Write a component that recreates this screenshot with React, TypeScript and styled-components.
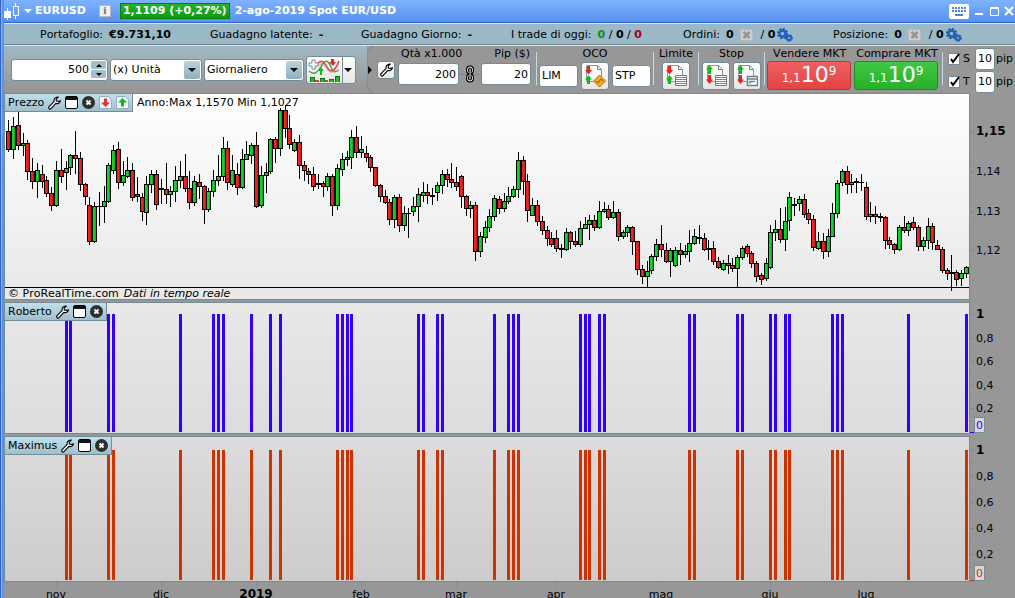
import React from "react";
import styled, { createGlobalStyle } from "styled-components";

const EDGE = "#748c98";
const UP = "#0fd22a";
const DOWN = "#ee2222";

const GlobalStyle = createGlobalStyle`
  * { box-sizing: border-box; }
  body {
    margin: 0;
    overflow: hidden;
    background: #979797;
    font-family: "DejaVu Sans", Verdana, sans-serif;
    font-size: 11px;
    line-height: 14px;
    font-kerning: none;
    color: #000;
  }
  button, input, select { font: inherit; color: inherit; margin: 0; }
  svg { display: block; flex: none; }
`;

/* ---------- data ---------- */

type Candle = [high: number, top: number, bottom: number, low: number, up: 0 | 1];

/* Daily candles, in thirds of a pixel below the top of the scale. */
const CANDLES: Candle[] = [
  [90, 123, 180, 186, 0], [82, 108, 180, 207, 1], [62, 105, 168, 180, 0], [130, 159, 168, 198, 1],
  [150, 159, 246, 270, 0], [204, 243, 276, 297, 0], [219, 240, 276, 324, 1], [225, 252, 276, 294, 0],
  [258, 270, 312, 321, 0], [291, 309, 348, 363, 0], [213, 240, 348, 351, 1], [177, 240, 261, 279, 0],
  [213, 234, 249, 300, 1], [192, 195, 234, 255, 1], [123, 195, 207, 252, 0], [186, 204, 285, 303, 0],
  [279, 282, 321, 345, 0], [321, 345, 456, 465, 0], [336, 348, 456, 459, 1], [306, 348, 351, 408, 0],
  [288, 333, 351, 399, 1], [219, 225, 336, 339, 1], [165, 180, 243, 252, 1], [156, 177, 279, 297, 0],
  [213, 255, 279, 288, 1], [201, 240, 261, 264, 1], [219, 240, 324, 333, 0], [261, 312, 322, 336, 0],
  [309, 321, 366, 393, 0], [258, 282, 369, 405, 1], [240, 252, 285, 309, 1], [240, 252, 345, 360, 0],
  [267, 294, 300, 342, 0], [219, 297, 315, 342, 0], [288, 303, 315, 351, 1], [228, 270, 306, 336, 1],
  [213, 258, 273, 294, 1], [192, 258, 297, 306, 0], [243, 294, 339, 357, 0], [258, 273, 339, 348, 1],
  [252, 276, 291, 327, 0], [285, 288, 360, 402, 0], [294, 303, 360, 366, 1], [240, 270, 306, 321, 1],
  [195, 258, 273, 288, 1], [141, 174, 261, 273, 1], [153, 174, 279, 300, 0], [195, 240, 285, 291, 1],
  [219, 252, 294, 315, 0], [177, 207, 294, 297, 1], [153, 192, 210, 210, 1], [159, 165, 198, 222, 1],
  [126, 165, 351, 354, 0], [228, 255, 348, 354, 1], [219, 246, 258, 309, 1], [144, 147, 246, 252, 1],
  [141, 147, 177, 219, 0], [54, 60, 177, 198, 1], [45, 60, 117, 144, 0], [75, 114, 165, 177, 0],
  [147, 156, 183, 186, 1], [135, 156, 228, 267, 0], [213, 225, 243, 273, 0], [234, 243, 255, 282, 0],
  [231, 252, 291, 303, 0], [252, 279, 285, 297, 0], [273, 279, 291, 321, 0], [249, 258, 291, 303, 1],
  [252, 258, 348, 378, 0], [222, 234, 348, 360, 1], [189, 207, 240, 258, 1], [183, 201, 210, 228, 1],
  [120, 141, 204, 237, 1], [108, 141, 189, 204, 0], [138, 177, 189, 204, 1], [168, 189, 204, 216, 0],
  [195, 201, 234, 246, 0], [231, 231, 288, 291, 0], [282, 285, 321, 336, 0], [300, 318, 339, 342, 0],
  [327, 336, 390, 405, 0], [315, 321, 390, 414, 1], [312, 321, 408, 426, 0], [348, 369, 408, 423, 1],
  [354, 369, 372, 444, 0], [321, 348, 366, 378, 1], [294, 312, 351, 396, 1], [276, 306, 318, 336, 1],
  [282, 306, 318, 342, 0], [294, 315, 321, 345, 0], [276, 285, 309, 333, 1], [240, 252, 288, 312, 1],
  [237, 252, 270, 291, 0], [219, 267, 279, 294, 0], [231, 276, 291, 303, 0], [255, 258, 321, 354, 0],
  [315, 318, 357, 378, 0], [333, 345, 357, 384, 1], [336, 345, 486, 513, 0], [426, 438, 486, 501, 1],
  [393, 411, 444, 459, 1], [357, 378, 414, 426, 1], [315, 324, 381, 393, 1], [318, 327, 357, 372, 0],
  [309, 333, 357, 366, 1], [291, 318, 336, 342, 1], [288, 297, 321, 324, 1], [186, 210, 300, 324, 1],
  [198, 210, 276, 315, 0], [252, 273, 363, 396, 0], [324, 345, 378, 378, 1], [330, 345, 396, 408, 0],
  [378, 393, 423, 435, 0], [408, 420, 447, 468, 0], [426, 444, 465, 471, 0], [420, 444, 477, 486, 0],
  [462, 474, 480, 504, 0], [414, 426, 480, 483, 1], [423, 426, 456, 477, 0], [423, 453, 465, 471, 0],
  [393, 414, 465, 471, 1], [381, 402, 417, 417, 1], [375, 390, 405, 450, 1], [375, 390, 414, 423, 0],
  [333, 363, 414, 417, 1], [336, 357, 366, 369, 1], [345, 357, 384, 390, 0], [333, 366, 384, 387, 1],
  [357, 366, 441, 453, 0], [420, 426, 441, 447, 1], [405, 411, 429, 441, 1], [408, 411, 456, 495, 0],
  [453, 453, 540, 555, 0], [525, 537, 561, 582, 0], [513, 543, 561, 591, 1], [492, 498, 543, 552, 1],
  [447, 462, 501, 513, 1], [405, 462, 480, 501, 0], [459, 480, 516, 519, 0], [474, 480, 516, 561, 1],
  [471, 480, 528, 531, 1], [459, 480, 495, 525, 0], [465, 483, 495, 504, 1], [420, 459, 486, 516, 1],
  [417, 438, 462, 465, 1], [405, 441, 447, 462, 0], [429, 444, 480, 483, 0], [450, 474, 480, 510, 0],
  [453, 474, 516, 525, 0], [501, 513, 534, 537, 0], [510, 519, 540, 543, 1], [495, 519, 528, 552, 0],
  [504, 525, 537, 546, 0], [495, 501, 537, 591, 1], [468, 474, 504, 510, 1], [462, 468, 492, 501, 0],
  [483, 489, 522, 534, 0], [513, 519, 561, 576, 0], [549, 555, 570, 585, 0], [504, 519, 567, 573, 1],
  [405, 426, 534, 537, 1], [390, 417, 429, 453, 1], [354, 417, 450, 459, 0], [351, 393, 450, 483, 1],
  [306, 321, 393, 423, 1], [324, 342, 348, 378, 0], [318, 327, 342, 363, 1], [312, 327, 375, 384, 0],
  [357, 369, 390, 402, 0], [375, 387, 474, 483, 0], [426, 453, 477, 480, 1], [429, 453, 486, 507, 0],
  [417, 438, 486, 501, 1], [339, 369, 441, 441, 1], [270, 279, 372, 384, 1], [237, 243, 279, 288, 1],
  [228, 243, 285, 312, 0], [252, 276, 285, 309, 1], [264, 273, 279, 309, 0], [252, 276, 279, 303, 0],
  [276, 291, 381, 390, 0], [336, 372, 381, 396, 1], [348, 372, 381, 402, 0], [369, 378, 384, 396, 0],
  [378, 381, 453, 477, 0], [441, 450, 465, 477, 0], [459, 462, 480, 492, 0], [405, 411, 480, 483, 1],
  [378, 411, 423, 429, 0], [393, 399, 423, 438, 1], [381, 396, 414, 420, 0], [405, 411, 471, 483, 0],
  [441, 450, 471, 483, 1], [384, 408, 453, 477, 1], [399, 408, 459, 480, 0], [450, 465, 480, 480, 0],
  [471, 477, 543, 549, 0], [534, 540, 552, 570, 0], [495, 546, 552, 603, 0], [540, 546, 570, 588, 0],
  [540, 549, 567, 588, 1], [528, 531, 552, 564, 1],
];

/* Days on which both indicators fire. */
const SIGNALS = [
  12, 13, 21, 22, 36, 43, 44, 45, 51, 55, 57, 69, 70, 71, 72, 86, 87, 90, 91, 102, 105, 106, 107,
  120, 121, 122, 124, 125, 143, 144, 153, 154, 160, 161, 163, 164, 173, 174, 175, 189, 201,
];

const MONTHS: { at: number; text: string; strong?: boolean }[] = [
  { at: 52, text: "nov" }, { at: 157, text: "dic" }, { at: 252, text: "2019", strong: true },
  { at: 357, text: "feb" }, { at: 452, text: "mar" }, { at: 552, text: "apr" },
  { at: 657, text: "mag" }, { at: 766, text: "giu" }, { at: 862, text: "lug" },
];

const PLOT_WIDTH = 964;
const dayX = (i: number) => Math.floor(8.87 + 4.7625 * i) - 5;
const levelY = (v: number) => Math.round(v / 3) - 4;

/* ---------- window frame ---------- */

const Window = styled.main`
  min-height: 100vh;
  padding-left: 4px;
  overflow: hidden;
  background: linear-gradient(90deg, #2e62c4 1px, #8ab8ff 1px 2px, #5b90ee 2px 4px, #979797 4px);
`;

const TitleBar = styled.header`
  height: 23px;
  display: flex;
  align-items: center;
  color: #fff;
  font-weight: bold;
  background: linear-gradient(#7db2ff, #5891ee);
  border-bottom: 1px solid #2f68c8;
`;

const Symbol = styled.button`
  display: flex;
  align-items: center;
  gap: 3px;
  padding: 0;
  border: 0;
  background: none;
  font-weight: bold;
`;

const InfoMark = styled.button`
  width: 12px;
  height: 12px;
  margin: 0 9px 0 13px;
  padding: 0;
  border: 1px solid #b9b9b9;
  background: #f1f1f1;
  color: #777;
  font: bold 10px/10px "DejaVu Serif", serif;
`;

const Quote = styled.span`
  height: 16px;
  padding: 0 2px;
  margin-right: 5px;
  border: 1px solid #07800b;
  background: linear-gradient(#27b32b, #0c9a12);
`;

const WindowTools = styled.div`
  margin-left: auto;
  display: flex;
  align-items: center;
  gap: 5px;
  padding-right: 1px;
`;

const BareButton = styled.button`
  display: flex;
  align-items: center;
  padding: 0;
  border: 0;
  background: none;
`;

const Summary = styled.section`
  height: 22px;
  display: grid;
  grid-template-columns: 170fr 151fr 150fr 172fr 150fr 182fr;
  align-items: center;
  padding: 1px 0 0 36px;
  background: #9ab8c5;
  border-top: 1px solid #cfe9f2;
  border-bottom: 1px solid #71868f;
  white-space: nowrap;
`;

const SummaryItem = styled.div`
  display: flex;
  align-items: center;
  gap: 6px;
`;

const Automatic = styled.span`
  display: flex;
  align-items: center;
  gap: 2px;
  padding-left: 2px;
`;

const Tone = styled.b<{ $c: string }>`
  color: ${(p) => p.$c};
`;

/* ---------- toolbar ---------- */

const Toolbar = styled.section`
  height: 48px;
  display: flex;
  border-top: 1px solid #dbe6ea;
`;

const Ranges = styled.div`
  flex: none;
  width: 363px;
  display: flex;
  align-items: center;
  gap: 2px;
  padding-left: 7px;
  background: linear-gradient(#a1b9c4, #979797 90%);
`;

const Trading = styled.div`
  flex: 1;
  display: flex;
  align-items: flex-start;
  gap: 2px;
`;

const Field = styled.span<{ $w: number }>`
  width: ${(p) => p.$w}px;
  height: 22px;
  display: flex;
  align-items: center;
  position: relative;
  background: #fff;
  border: 1px solid ${EDGE};
  border-radius: 3px;
`;

const TextInput = styled.input<{ $align?: string }>`
  width: 100%;
  min-width: 0;
  height: 18px;
  padding: 0 2px;
  border: 0;
  background: none;
  text-align: ${(p) => p.$align ?? "left"};
  outline: none;
`;

const Select = styled.select`
  appearance: none;
  width: 100%;
  height: 20px;
  padding: 0 20px 0 2px;
  border: 0;
  background: none;
  outline: none;
`;

const SelectArrow = styled.span`
  position: absolute;
  right: 1px;
  top: 1px;
  width: 16px;
  height: 18px;
  display: grid;
  place-items: center;
  border-radius: 2px;
  background: linear-gradient(#b9d3dd, #8fb0be);
  pointer-events: none;
`;

const Spin = styled.span`
  flex: none;
  width: 15px;
  margin-right: 1px;
  display: grid;
  gap: 1px;
`;

const SpinButton = styled.button`
  height: 8px;
  padding: 0;
  display: grid;
  place-items: center;
  border: 0;
  border-radius: 1px;
  background: #a3bfcb;
`;

const ToolButton = styled.button<{ $w: number; $h: number }>`
  width: ${(p) => p.$w}px;
  height: ${(p) => p.$h}px;
  flex: none;
  padding: 0;
  display: flex;
  align-items: center;
  justify-content: center;
  background: linear-gradient(#fff, #e6e6e6);
  border: 1px solid ${EDGE};
  border-radius: 3px;
`;

const ChartButton = styled(ToolButton)`
  justify-content: space-between;
  padding: 0 3px 0 1px;
`;

const Group = styled.div<{ $w: number }>`
  flex: none;
  width: ${(p) => p.$w}px;
  display: flex;
  flex-direction: column;
  white-space: nowrap;
`;

const Captions = styled.div<{ $spread?: boolean }>`
  height: 15px;
  display: flex;
  align-items: flex-end;
  justify-content: ${(p) => (p.$spread ? "space-between" : "center")};
  padding: ${(p) => (p.$spread ? "0 4px" : "0")};
`;

const Controls = styled.div`
  height: 29px;
  display: flex;
  align-items: center;
  justify-content: center;
  gap: 3px;
`;

const QuantityControls = styled(Controls)`
  height: 26px;
  gap: 0;
  padding: 0 3px 0 1px;
`;

const Linked = styled.div`
  flex: 1;
  display: grid;
  place-items: center;
  background: linear-gradient(${EDGE}, ${EDGE}) center / 100% 1px no-repeat;
`;

const Separator = styled.i`
  flex: none;
  width: 1px;
  height: 33px;
  margin-top: 6px;
  background: #c5dce6;
`;

const Deal = styled.button<{ $buy?: boolean }>`
  width: 84px;
  height: 29px;
  padding: 4px 0 0;
  color: #fff;
  line-height: 20px;
  white-space: nowrap;
  font-size: 12px;
  border-radius: 3px;
  border: 1px solid ${(p) => (p.$buy ? "#1d8f22" : "#b53a3a")};
  background: ${(p) => (p.$buy ? "linear-gradient(#40c843, #28b02c)" : "linear-gradient(#f06060, #e24444)")};
`;

const Big = styled.span`
  font-size: 22px;
  line-height: 1px;
`;

const Pipette = styled.span`
  line-height: 1px;
  vertical-align: 7px;
`;

const Stops = styled.div`
  flex: 1;
  display: grid;
  grid-template-rows: 21px 21px;
  gap: 2px;
  padding: 2px 0 0 3px;
`;

const StopRow = styled.div`
  display: flex;
  align-items: center;
  gap: 1px;
  white-space: nowrap;
`;

const TickLabel = styled.label`
  flex: none;
  width: 26px;
  display: flex;
  align-items: center;
  gap: 3px;
  position: relative;
`;

const TickBox = styled.input`
  appearance: none;
  width: 12px;
  height: 12px;
  margin: 0;
  background: #fff;
  border: 1px solid ${EDGE};
`;

const TickMark = styled.svg`
  position: absolute;
  left: 1px;
  top: 1px;
  pointer-events: none;
`;

/* ---------- chart panes ---------- */

const Panes = styled.section`
  display: grid;
  gap: 2px;
`;

const PaneRow = styled.div`
  display: grid;
  grid-template-columns: minmax(0, 1fr) 45px;
`;

const Pane = styled.div<{ $from: string; $to: string }>`
  position: relative;
  border: 1px solid ${EDGE};
  background: linear-gradient(${(p) => p.$from}, ${(p) => p.$to});
`;

const PaneTab = styled.div`
  position: absolute;
  left: 0;
  top: 0;
  display: flex;
  align-items: center;
`;

const Tab = styled.div`
  height: 18px;
  display: flex;
  align-items: center;
  gap: 4px;
  padding: 0 3px;
  border: solid ${EDGE};
  border-width: 0 1px 1px 0;
  background: linear-gradient(#c0e0ec, #a0bfcb);
`;

const TabName = styled.span<{ $w?: number }>`
  width: ${(p) => (p.$w ? `${p.$w}px` : "auto")};
  overflow: hidden;
`;

const Range = styled.span`
  padding-left: 4px;
`;

const Credit = styled.div`
  position: absolute;
  left: 3px;
  bottom: -2px;
  display: flex;
  gap: 5px;
`;

const Scale = styled.svg`
  width: 45px;
  height: 0;
  min-height: 100%;
  overflow: visible;
`;

const TimeScale = styled.svg`
  width: 100%;
  height: 16px;
`;

const TickText = styled.text<{ $strong?: boolean }>`
  font-size: ${(p) => (p.$strong ? 12 : 11)}px;
  font-weight: ${(p) => (p.$strong ? "bold" : "normal")};
`;

/* ---------- icons ---------- */

const Caret = ({ w = 8, fill = "#000" }: { w?: number; fill?: string }) => (
  <svg width={w} height={w / 2} viewBox="0 0 8 4"><path d="M0 0h8L4 4z" fill={fill} /></svg>
);

const CandleLogo = () => (
  <svg width="17" height="18" viewBox="0 0 17 18" shapeRendering="crispEdges">
    <path d="M3 6h1v12H3zM0 9h7v7H0zM11 1h1v16h-1z" fill="#fff" />
    <rect x="9.500" y="4.500" width="5" height="9" fill="#6ba2f8" stroke="#fff" />
  </svg>
);

const Keyboard = () => (
  <svg width="20" height="15" viewBox="0 0 20 15">
    <rect width="20" height="15" rx="2" fill="#fff" />
    <path d="M3 4h14M3 7h14" stroke="#4d84de" strokeWidth="2" strokeDasharray="2 1" />
    <path d="M6 11h8" stroke="#4d84de" strokeWidth="2" />
  </svg>
);

const Wrench = () => (
  <svg width="13" height="14" viewBox="0 0 13 14">
    <path
      d="M8 1.500 C6.300 2.200 5.800 3.800 6.200 5.400 L.9 10.800 Q.4 12.200 1.400 12.900 Q2.400 13.400 3 12.700 L7.800 7.400 C9.800 8 11.900 7.300 12.500 4.700 L10.100 5.600 L8.300 4.900 L8.200 3.200 L10.300 1 Q9 .9 8 1.500z"
      fill="#fff" stroke="#000" strokeWidth="1.100" strokeLinejoin="round"
    />
  </svg>
);

const Frame = () => (
  <svg width="13" height="13" viewBox="0 0 13 13">
    <rect x=".5" y=".5" width="12" height="12" rx="1.500" fill="#fff" stroke="#000" />
    <path d="M1 1h11v3H1z" fill="#111" />
  </svg>
);

const CloseDisc = () => (
  <svg width="13" height="13" viewBox="0 0 13 13">
    <circle cx="6.500" cy="6.500" r="6.500" fill="#2e2e2e" />
    <path d="M4.500 4.500l4 4M8.500 4.500l-4 4" stroke="#fff" strokeWidth="2" />
  </svg>
);

const ArrowPage = ({ up }: { up?: boolean }) => (
  <svg width="13" height="13" viewBox="0 0 13 13">
    <path d="M.5.5h9l3 3v9H.5z" fill="#f2f6fb" stroke="#94aec6" />
    <path
      d={up ? "M6.500 2l4.500 4.500H8v4H5v-4H2z" : "M6.500 11L11 6.500H8v-4H5v4H2z"}
      fill={up ? "#16b51e" : "#e33434"}
    />
  </svg>
);

const CancelMark = () => (
  <svg width="13" height="12" viewBox="0 0 13 12">
    <rect x=".5" y=".5" width="12" height="11" fill="#cfcfcf" stroke="#bababa" />
    <path d="M3.500 3l6 6M9.500 3l-6 6" stroke="#959595" strokeWidth="2.500" />
  </svg>
);

const Gears = () => (
  <svg width="16" height="14" viewBox="0 0 16 14">
    <circle cx="5.500" cy="5.500" r="4.500" fill="none" stroke="#164f9e" strokeWidth="2" strokeDasharray="2 1.500" />
    <circle cx="5.500" cy="5.500" r="3" fill="none" stroke="#1f62bf" strokeWidth="2.500" />
    <circle cx="12" cy="10" r="3" fill="none" stroke="#164f9e" strokeWidth="1.500" strokeDasharray="1.500 1" />
    <circle cx="12" cy="10" r="2" fill="none" stroke="#1f62bf" strokeWidth="2" />
  </svg>
);

const Indicators = () => (
  <svg width="32" height="24" viewBox="0 0 32 24">
    <path d="M7 12C11 2 15 2 19 9s7 5 12-6v5c-4 9-9 9-13 3S11 8 7 12z" fill="#f6b9b9" />
    <path d="M1 13C6 18 10 14 14 7s7-3 9 2 4 6 8 3" fill="none" stroke="#49a54e" strokeWidth="1.500" />
    <path d="M10 5c4-4 7 0 9 4s6 8 12-6" fill="none" stroke="#d34a4a" strokeWidth="1.500" />
    <path d="M4 2h3v3h3v3H7v3H4V8H1V5h3z" fill="#fff" stroke="#7590a2" />
    <path d="M12 17v-4h-2l3-4 3 4h-2v4z" fill="#15b81e" />
    <path d="M23 1h3v3h2l-3 4-4-4h2z" fill="#e02b2b" />
    <g shapeRendering="crispEdges">
      <path d="M2 19h4v5H2zM12 20h4v4h-4zM21 21h4v3h-4zM27 18h4v6h-4z" fill="#18c022" stroke="#0c7a14" />
      <path d="M7 22h4v2H7zM17 22h3v2h-3z" fill="#e33" />
    </g>
  </svg>
);

const ChainLink = () => (
  <svg width="10" height="18" viewBox="0 0 10 18" fill="none">
    <g stroke="#000" strokeWidth="3"><rect x="2.500" y="2" width="5" height="6" rx="2.500" /><rect x="2.500" y="10" width="5" height="6" rx="2.500" /></g>
    <g stroke="#fff"><rect x="2.500" y="2" width="5" height="6" rx="2.500" /><rect x="2.500" y="10" width="5" height="6" rx="2.500" /></g>
    <path d="M5 5v8" stroke="#000" strokeWidth="3" /><path d="M5 5v8" stroke="#fff" />
  </svg>
);

const OrderIcon = ({ kind }: { kind: "oco" | "limit" | "stop" | "trail" }) => {
  const redTop = kind === "oco" || kind === "limit";
  return (
    <svg width="22" height="22" viewBox="0 0 22 22">
      <path d="M2.500.5h11l4 4v12h-15z" fill="#fafafa" stroke="#8b9aa2" />
      <path d="M13.500.5v4h4" fill="none" stroke="#6d8088" />
      <path d={redTop ? "M3 1h3v4h2L4.500 9.500 1 5h2z" : "M4.500 0L8 4.500H6V9H3V4.500H1z"} fill={redTop ? "#ee1f1f" : "#12bb1c"} />
      <path d={redTop ? "M4.500 10L8 14.500H6V19H3v-4.500H1z" : "M3 10h3v4.500h2L4.500 19 1 14.500h2z"} fill={redTop ? "#12bb1c" : "#ee1f1f"} />
      {kind === "oco" && (
        <>
          <path d="M15.500 10l6 6-6 6-6-6z" fill="#f5a81c" stroke="#b87408" />
          <path d="M12.500 16a1.500 1.500 0 1 0 3 0 1.500 1.500 0 1 1 3 0" fill="none" stroke="#9c5a00" />
        </>
      )}
      {(kind === "limit" || kind === "stop") && (
        <>
          <path d="M10.500 10.500h11v10h-11z" fill="#fff" stroke="#6d8088" />
          <path d="M11 12.500h10M11 14.500h10M11 16.500h10M11 18.500h10" stroke="#7c878d" />
        </>
      )}
      {kind === "trail" && (
        <>
          <path d="M11.500 11.500h10v9h-10z" fill="#fff" stroke="#6d8088" strokeWidth="1.500" />
          <path d="M12 14h9M14 18.500v-2h5" fill="none" stroke="#6d8088" strokeWidth="1.500" />
        </>
      )}
    </svg>
  );
};

/* ---------- pieces ---------- */

const PaneTools = () => (
  <>
    <BareButton aria-label="Impostazioni"><Wrench /></BareButton>
    <BareButton aria-label="Ingrandisci"><Frame /></BareButton>
    <BareButton aria-label="Chiudi"><CloseDisc /></BareButton>
  </>
);

const PriceChart = () => (
  <svg width="100%" height="205" viewBox={`0 0 ${PLOT_WIDTH} 205`} preserveAspectRatio="none" shapeRendering="crispEdges">
    <rect y="193" width={PLOT_WIDTH} height="1" />
    {CANDLES.map(([high, top, bottom, low, up], i) => {
      const x = dayX(i);
      const y = levelY(top);
      const h = levelY(bottom) - y;
      return (
        <g key={i}>
          <rect x={x} y={levelY(high)} width="1" height={levelY(low) - levelY(high)} />
          <rect x={x - 2} y={y} width="5" height={h} />
          {h > 2 && <rect x={x - 1} y={y + 1} width="3" height={h - 2} fill={up ? UP : DOWN} />}
          {h > 2 && <rect x={x + 1} y={y + 1} width="1" height={h - 2} fill="#000" opacity="0.150" />}
        </g>
      );
    })}
  </svg>
);

const SignalChart = ({ height, top, color }: { height: number; top: number; color: string }) => (
  <svg width="100%" height={height} viewBox={`0 0 ${PLOT_WIDTH} ${height}`} preserveAspectRatio="none" shapeRendering="crispEdges">
    {SIGNALS.map((i) => (
      <rect key={i} x={dayX(i) - 1} y={top} width="3" height={height - top - 1} fill={color} />
    ))}
  </svg>
);

const PriceScale = () => (
  <Scale>
    {["1,15", "1,14", "1,13", "1,12"].map((text, i) => {
      const y = [38, 78, 118, 157][i];
      return (
        <g key={text}>
          <rect y={y} width="4" height="1" fill={EDGE} />
          <TickText x="6" y={y + 4} $strong={i === 0}>{text}</TickText>
        </g>
      );
    })}
  </Scale>
);

const UnitScale = ({ top, bottom, color }: { top: number; bottom: number; color: string }) => {
  const step = (bottom - top) / 5;
  return (
    <Scale>
      {["1", "0,8", "0,6", "0,4", "0,2"].map((text, i) => {
        const y = Math.round(top + step * i);
        return (
          <g key={text}>
            <rect y={y} width="4" height="1" fill={EDGE} />
            <rect y={Math.round(y + step / 2)} width="2" height="1" fill={EDGE} />
            <TickText x="6" y={y + 4} $strong={i === 0}>{text}</TickText>
          </g>
        );
      })}
      <rect y={bottom} width="4" height="1" fill={color} />
      <rect x="4.500" y={bottom - 14.5} width="10" height="15" fill="#d8d8d8" stroke={EDGE} />
      <TickText x="6" y={bottom - 3} fill={color}>0</TickText>
    </Scale>
  );
};

const StopLine = ({ id, text }: { id: string; text: string }) => (
  <StopRow>
    <TickLabel>
      <TickBox type="checkbox" defaultChecked />
      <TickMark width="11" height="11" viewBox="0 0 11 11">
        <path d="M2 6l2 3 6-8" fill="none" stroke="#000" strokeWidth="2" />
      </TickMark>
      {text}
    </TickLabel>
    <Field $w={20}><TextInput id={id} aria-label={`${text} pip`} defaultValue="10" /></Field>
    <label htmlFor={id}>pip</label>
  </StopRow>
);

export default function App() {
  return (
    <Window>
      <GlobalStyle />
      <TitleBar>
        <Symbol><CandleLogo /><Caret fill="#fff" />EURUSD</Symbol>
        <InfoMark aria-label="Informazioni">i</InfoMark>
        <Quote>1,1109 (+0,27%)</Quote>
        <span>2-ago-2019 Spot EUR/USD</span>
        <WindowTools>
          <BareButton aria-label="Tastiera"><Keyboard /></BareButton>
          <BareButton aria-label="Riduci">
            <svg width="10" height="10"><path d="M1 8h8" stroke="#fff" strokeWidth="2" /></svg>
          </BareButton>
          <BareButton aria-label="Ingrandisci">
            <svg width="10" height="10"><path d="M1.500 1.500h8v8h-8zM1 2.500h9" fill="none" stroke="#fff" /></svg>
          </BareButton>
          <BareButton aria-label="Chiudi">
            <svg width="10" height="10"><path d="M1 1l8 8M9 1L1 9" stroke="#fff" strokeWidth="2" /></svg>
          </BareButton>
        </WindowTools>
      </TitleBar>

      <Summary>
        <SummaryItem>Portafoglio: <b>€9.731,10</b></SummaryItem>
        <SummaryItem>Guadagno latente: <b>-</b></SummaryItem>
        <SummaryItem>Guadagno Giorno: <b>-</b></SummaryItem>
        <SummaryItem>
          I trade di oggi: <span><Tone $c="#0b8f14">0</Tone> / <b>0</b> / <Tone $c="#a80010">0</Tone></span>
        </SummaryItem>
        <SummaryItem>Ordini: <b>0</b><CancelMark /><Automatic><span>/ <b>0</b></span><Gears /></Automatic></SummaryItem>
        <SummaryItem>Posizione: <b>0</b><CancelMark /><Automatic><span>/ <b>0</b></span><Gears /></Automatic></SummaryItem>
      </Summary>

      <Toolbar>
        <Ranges>
          <Field $w={97}>
            <TextInput aria-label="Numero di unità" defaultValue="500" $align="right" />
            <Spin>
              <SpinButton aria-label="Aumenta"><svg width="6" height="3"><path d="M0 3h6L3 0z" /></svg></SpinButton>
              <SpinButton aria-label="Diminuisci"><Caret w={6} /></SpinButton>
            </Spin>
          </Field>
          <Field $w={92}>
            <Select aria-label="Tipo di unità"><option>(x) Unità</option></Select>
            <SelectArrow><Caret /></SelectArrow>
          </Field>
          <Field $w={100}>
            <Select aria-label="Intervallo"><option>Giornaliero</option></Select>
            <SelectArrow><Caret /></SelectArrow>
          </Field>
          <ChartButton $w={50} $h={28} aria-label="Indicatori">
            <Indicators />
            <svg width="1" height="26"><path d="M0 0h1v26H0z" fill={EDGE} /></svg>
            <Caret />
          </ChartButton>
        </Ranges>

        <Trading>
          <svg width="8" height="47" viewBox="0 0 8 47">
            <path d="M6 0L0 5V42L6 47" fill="#979797" stroke={EDGE} />
            <path d="M1 20v8l4-4z" />
          </svg>
          <Group $w={18}>
            <Captions />
            <ToolButton $w={18} $h={18} aria-label="Impostazioni ordini"><Wrench /></ToolButton>
          </Group>
          <Group $w={137}>
            <Captions $spread><label htmlFor="qty">Qtà x1.000</label><label htmlFor="pip">Pip ($)</label></Captions>
            <QuantityControls>
              <Field $w={61}><TextInput id="qty" defaultValue="200" $align="right" /></Field>
              <Linked><ChainLink /></Linked>
              <Field $w={50}><TextInput id="pip" defaultValue="20" $align="right" /></Field>
            </QuantityControls>
          </Group>
          <Separator />
          <Group $w={112}>
            <Captions>OCO</Captions>
            <Controls>
              <Field $w={39}><TextInput aria-label="Limite OCO" defaultValue="LIM" /></Field>
              <ToolButton $w={28} $h={28} aria-label="OCO"><OrderIcon kind="oco" /></ToolButton>
              <Field $w={39}><TextInput aria-label="Stop OCO" defaultValue="STP" /></Field>
            </Controls>
          </Group>
          <Separator />
          <Group $w={40}>
            <Captions>Limite</Captions>
            <Controls><ToolButton $w={28} $h={28} aria-label="Limite"><OrderIcon kind="limit" /></ToolButton></Controls>
          </Group>
          <Separator />
          <Group $w={61}>
            <Captions>Stop</Captions>
            <Controls>
              <ToolButton $w={28} $h={28} aria-label="Stop"><OrderIcon kind="stop" /></ToolButton>
              <ToolButton $w={28} $h={28} aria-label="Trailing stop"><OrderIcon kind="trail" /></ToolButton>
            </Controls>
          </Group>
          <Separator />
          <Group $w={85}>
            <Captions>Vendere MKT</Captions>
            <Deal>1,1<Big>10</Big><Pipette>9</Pipette></Deal>
          </Group>
          <Group $w={86}>
            <Captions>Comprare MKT</Captions>
            <Deal $buy>1,1<Big>10</Big><Pipette>9</Pipette></Deal>
          </Group>
          <Separator />
          <Stops>
            <StopLine id="stop-pip" text="S" />
            <StopLine id="target-pip" text="T" />
          </Stops>
        </Trading>
      </Toolbar>

      <Panes>
        <PaneRow>
          <Pane $from="#ffffff" $to="#e8e8e8">
            <PriceChart />
            <PaneTab>
              <Tab>
                <TabName $w={36}>Prezzo</TabName>
                <PaneTools />
                <BareButton aria-label="Vendi"><ArrowPage /></BareButton>
                <BareButton aria-label="Compra"><ArrowPage up /></BareButton>
              </Tab>
              <Range>Anno:Max 1,1570 Min 1,1027</Range>
            </PaneTab>
            <Credit><span>© ProRealTime.com</span><em>Dati in tempo reale</em></Credit>
          </Pane>
          <PriceScale />
        </PaneRow>
        <PaneRow>
          <Pane $from="#e8e8e8" $to="#dcdcdc">
            <SignalChart height={130} top={11} color="#3300ff" />
            <PaneTab><Tab><TabName>Roberto</TabName><PaneTools /></Tab></PaneTab>
          </Pane>
          <UnitScale top={12} bottom={130} color="#3300ff" />
        </PaneRow>
        <PaneRow>
          <Pane $from="#dcdcdc" $to="#cccccc">
            <SignalChart height={144} top={13} color="#cc3300" />
            <PaneTab><Tab><TabName>Maximus</TabName><PaneTools /></Tab></PaneTab>
          </Pane>
          <UnitScale top={14} bottom={144} color="#cc3300" />
        </PaneRow>
      </Panes>
      <PaneRow>
        <TimeScale>
          {MONTHS.map((m) => {
            const x = `${(m.at / 966) * 100}%`;
            return (
              <g key={m.text}>
                <rect x={x} width="1" height="4" fill={EDGE} />
                <TickText x={x} y="16" textAnchor="middle" $strong={m.strong}>{m.text}</TickText>
              </g>
            );
          })}
        </TimeScale>
      </PaneRow>
    </Window>
  );
}
